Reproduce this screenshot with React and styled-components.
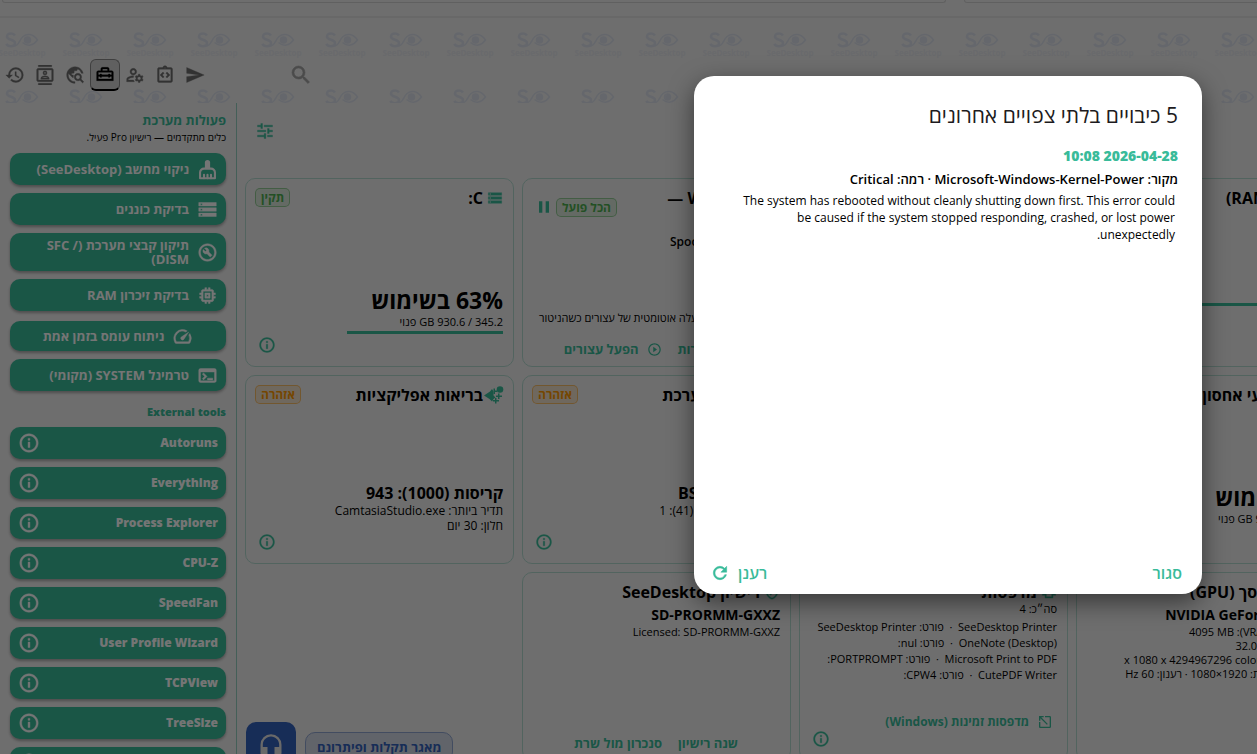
import React from 'react'

import styled, { createGlobalStyle, css } from 'styled-components'
import {
  MdHistory,
  MdOutlineContacts,
  MdTravelExplore,
  MdOutlineHomeRepairService,
  MdOutlineManageAccounts,
  MdOutlineIntegrationInstructions,
  MdSend,
  MdSearch,
  MdTune,
  MdStorage,
  MdOutlineBuildCircle,
  MdMemory,
  MdSpeed,
  MdOutlineTerminal,
  MdInfoOutline,
  MdPause,
  MdPlayCircleOutline,
  MdOutlineVerifiedUser,
  MdOutlinePrint,
  MdOpenInNew,
  MdRefresh,
  MdHeadset,
} from 'react-icons/md'

const accent = '#39bb9a'

const BrushIcon = ({ size }) => (
  <svg width={size} height={size} viewBox='0 0 24 24' fill='none' stroke='currentColor' strokeLinejoin='round' aria-hidden='true'>
    <path d='M9 11V4a3 3 0 0 1 6 0v7z' fill='currentColor' stroke='none' />
    <BrushBody d='M8 11h8a4.500 4.500 0 0 1 4.500 4.500V22h-17v-6.500A4.500 4.500 0 0 1 8 11Z' />
    <BrushBody d='M8 22v-4M12 22v-4M16 22v-4' strokeLinecap='round' />
  </svg>
)

const toolbarItems = [
  { label: 'היסטוריה', Icon: MdHistory },
  { label: 'אנשי קשר', Icon: MdOutlineContacts },
  { label: 'גילוי רשת', Icon: MdTravelExplore },
  { label: 'כלים', Icon: MdOutlineHomeRepairService, active: true },
  { label: 'ניהול משתמשים', Icon: MdOutlineManageAccounts },
  { label: 'סקריפטים', Icon: MdOutlineIntegrationInstructions },
  { label: 'שליחה', Icon: MdSend },
]

const systemActions = [
  { label: 'ניקוי מחשב (SeeDesktop)', Icon: BrushIcon },
  { label: 'בדיקת כוננים', Icon: MdStorage },
  { label: 'תיקון קבצי מערכת (SFC / DISM)', Icon: MdOutlineBuildCircle },
  { label: 'בדיקת זיכרון RAM', Icon: MdMemory },
  { label: 'ניתוח עומס בזמן אמת', Icon: MdSpeed, centered: true },
  { label: 'טרמינל SYSTEM (מקומי)', Icon: MdOutlineTerminal },
]

const externalTools = [
  'Autoruns',
  'Everything',
  'Process Explorer',
  'CPU-Z',
  'SpeedFan',
  'User Profile Wizard',
  'TCPView',
  'TreeSize',
  'WizTree',
]

const printers = [
  ['SeeDesktop Printer', 'SeeDesktop Printer'],
  ['OneNote (Desktop)', 'nul:'],
  ['Microsoft Print to PDF', 'PORTPROMPT:'],
  ['CutePDF Writer', 'CPW4:'],
]

const HealthIcon = () => (
  <HealthSvg width='16' height='18' viewBox='2 0 16 18' fill='currentColor' aria-hidden='true'>
    <path d='M-1 9.500 5 5.500 7 3 8.500 5.500v4l2 2-2 1.500L7 15.500 4.500 13Z' />
    <circle cx='15' cy='3.500' r='3.300' />
    <path d='M8.500 2.500h1.500v2h2V6h-2v2H8.500zM13 7.500h1.500v2h2.500V11h-2.500v2H13v-2h-2V9.500h2zM10 12h1.500v2H14v1.500h-2.500V17.500H10V15.500H8V14h2z' />
  </HealthSvg>
)

const Mark = ({ named }) => (
  <MarkCell>
    <svg width='34' height='18' viewBox='0 0 34 18' fill='none' stroke='#dce1ec' aria-hidden='true'>
      <path d='M10 4.500C9 3 7.500 2.500 6 2.500c-2.500 0-4 1.200-4 3C2 9.500 10 8 10 12c0 2-1.700 3.200-4.200 3.200-1.900 0-3.600-.8-4.500-2.400' strokeWidth='2.600' />
      <path d='M9 15c5 0 5-6 9-9.500 4-3.300 10-3 14.500 3.500-4 5.500-10 7-15 2.500' strokeWidth='1.500' />
      <circle cx='22.500' cy='9' r='3.800' fill='#dce1ec' stroke='none' />
    </svg>
    {named && <span>SeeDesktop</span>}
  </MarkCell>
)

const CardHead = ({ icon, title, badge, tone, children }) => (
  <Head>
    <Title>
      {icon}
      <h3>{title}</h3>
    </Title>
    {badge && <Badge $tone={tone}>{badge}</Badge>}
    {children}
  </Head>
)

const InfoFooter = () => (
  <Footer>
    <IconButton type='button' aria-label='מידע'>
      <MdInfoOutline size={18} />
    </IconButton>
  </Footer>
)

const App = () => {
  return (
    <Shell>
      <GlobalStyle />
      <TopStrip>
        <StripPanel $grow={944} />
        <StripPanel $grow={300} />
      </TopStrip>

      <Header>
        <Watermark aria-hidden='true'>
          {[0, 1].map((row) => (
            <MarkRow key={row}>
              {Array.from({ length: 20 }, (_, i) => <Mark key={i} named={row === 0} />)}
            </MarkRow>
          ))}
        </Watermark>
        <Toolbar>
          {toolbarItems.map(({ label, Icon, active }) => (
            <ToolButton key={label} type='button' aria-label={label} $active={active}>
              <Icon size={20} />
            </ToolButton>
          ))}
        </Toolbar>
        <SearchButton type='button' aria-label='חיפוש'>
          <MdSearch size={24} />
        </SearchButton>
      </Header>

      <Main>
        <Sidebar dir='rtl'>
          <SideTitle>פעולות מערכת</SideTitle>
          <SideNote>כלים מתקדמים — רישיון Pro פעיל.</SideNote>
          <ActionList>
            {systemActions.map(({ label, Icon, centered }) => (
              <ActionButton key={label} type='button' $centered={centered}>
                <Icon size={21} />
                <span>{label}</span>
              </ActionButton>
            ))}
          </ActionList>
          <SideSubtitle>External tools</SideSubtitle>
          <ActionList>
            {externalTools.map((name) => (
              <ActionButton key={name} type='button' $external>
                <span>{name}</span>
                <MdInfoOutline size={22} />
              </ActionButton>
            ))}
          </ActionList>
        </Sidebar>

        <Dashboard>
          <FilterBar>
            <IconButton type='button' aria-label='סינון'>
              <MirroredTune size={20} />
            </IconButton>
          </FilterBar>

          <Grid dir='rtl'>
            <Card>
              <CardHead icon={<MdMemory size={16} />} title='זיכרון (RAM)' />
              <Body $bottom>
                <Small>12.1 / 15.8 GB</Small>
                <Meter $value={100} />
              </Body>
              <Spacer $size={58} />
            </Card>
            <Card>
              <CardHead icon={<MdSpeed size={16} />} title='מעבד' />
            </Card>
            <Card>
              <CardHead icon={<MdSpeed size={16} />} title='Windows —'>
                <BadgeGroup>
                  <Badge $tone='ok'>הכל פועל</Badge>
                  <MdPause size={20} />
                </BadgeGroup>
              </CardHead>
              <Service>Spooler · wuauserv</Service>
              <Body $bottom>
                <Hint>ניטור פעיל — הפעלה אוטומטית של עצורים כשהניטור</Hint>
              </Body>
              <LinkRow>
                <TextButton type='button'>פתח הגדרות</TextButton>
                <TextButton type='button'>
                  <MdPlayCircleOutline size={15} />
                  הפעל עצורים
                </TextButton>
              </LinkRow>
            </Card>
            <Card>
              <CardHead icon={<MdStorage size={16} />} title='C:' badge='תקין' tone='ok' />
              <Body $bottom>
                <Big>63% בשימוש</Big>
                <Small>345.2 / 930.6 GB פנוי</Small>
                <Meter $value={63} />
              </Body>
              <InfoFooter />
            </Card>

            <Card>
              <CardHead icon={<MdStorage size={16} />} title='כל אמצעי אחסון' />
              <Body $bottom>
                <Big>9% בשימוש</Big>
                <Small>840.30 / 931.50 GB פנוי</Small>
              </Body>
              <Spacer $size={37} />
            </Card>
            <Card>
              <CardHead icon={<MdStorage size={16} />} title='רשת' />
            </Card>
            <Card>
              <CardHead icon={<MdStorage size={16} />} title='יציבות מערכת' badge='אזהרה' tone='warn' />
              <Body $bottom>
                <Value $large>אירועים BSOD</Value>
                <Detail>כיבויים לא תקינים (41): 1</Detail>
                <Detail>&nbsp;</Detail>
              </Body>
              <InfoFooter />
            </Card>
            <Card>
              <CardHead icon={<HealthIcon />} title='בריאות אפליקציות' badge='אזהרה' tone='warn' />
              <Body $bottom>
                <Value $large>קריסות (1000): 943</Value>
                <Detail>תדיר ביותר: CamtasiaStudio.exe</Detail>
                <Detail>חלון: 30 יום</Detail>
              </Body>
              <InfoFooter />
            </Card>

            <Card>
              <CardHead icon={<MdMemory size={16} />} title='כרטיס מסך (GPU)' />
              <Body>
                <Value>NVIDIA GeForce GTX 970</Value>
                <Small>זיכרון הווידאו (VRAM): 4095 MB</Small>
                <Small>דרייבר: 32.0.15.6094</Small>
                <Small>התצוגה: 1920 x 1080 x 4294967296 colors</Small>
                <Small>הרזולוציה הנוכחית: 1920×1080 · רענון: 60 Hz</Small>
              </Body>
            </Card>
            <Card>
              <CardHead icon={<MdOutlinePrint size={16} />} title='מדפסות' />
              <Body>
                <Small>סה״כ: 4</Small>
                <PrinterList>
                  {printers.map(([name, port]) => (
                    <li key={name}>{name}&nbsp; ·&nbsp; פורט: {port}</li>
                  ))}
                </PrinterList>
              </Body>
              <PrinterLink type='button'>
                <MirroredOpen size={16} />
                מדפסות זמינות (Windows)
              </PrinterLink>
              <InfoFooter />
            </Card>
            <Card>
              <CardHead icon={<MdOutlineVerifiedUser size={16} />} title='רישיון SeeDesktop' />
              <Body>
                <Value>SD-PRORMM-GXXZ</Value>
                <Small>Licensed: SD-PRORMM-GXXZ</Small>
              </Body>
              <LinkRow>
                <TextButton type='button'>שנה רישיון</TextButton>
                <TextButton type='button'>סנכרון מול שרת</TextButton>
              </LinkRow>
            </Card>
          </Grid>
        </Dashboard>
      </Main>

      <Support>
        <SupportButton type='button' aria-label='תמיכה'>
          <MdHeadset size={28} />
        </SupportButton>
        <SupportChip type='button'>מאגר תקלות ופיתרונם</SupportChip>
      </Support>

      <Overlay>
        <Dialog role='dialog' aria-modal='true' aria-labelledby='dialog-title' dir='rtl'>
          <DialogTitle id='dialog-title'>5 כיבויים בלתי צפויים אחרונים</DialogTitle>
          <Event>
            <EventTime>2026-04-28 10:08</EventTime>
            <EventSource>מקור: Microsoft-Windows-Kernel-Power · רמה: Critical</EventSource>
            <EventText>
              The system has rebooted without cleanly shutting down first. This error could be caused if the
              system stopped responding, crashed, or lost power unexpectedly.
            </EventText>
          </Event>
          <DialogActions>
            <DialogButton type='button'>סגור</DialogButton>
            <DialogButton type='button'>
              רענן
              <MdRefresh size={20} />
            </DialogButton>
          </DialogActions>
        </Dialog>
      </Overlay>
    </Shell>
  )
}

const GlobalStyle = createGlobalStyle`
*{
    box-sizing: border-box;
}
body{
    margin: 0;
    overflow: hidden;
    background-color: #f0f0f0;
    font-family: "Open Sans", "Noto Sans", sans-serif;
    color: #000;
}
h2, h3, p, ul{
    margin: 0;
    padding: 0;
}
button{
    border: none;
    background: none;
    padding: 0;
    font-family: inherit;
    color: inherit;
    cursor: pointer;
}
svg{
    flex-shrink: 0;
}
/* icon bounding boxes must stay invisible when icons get a stroke */
path[fill="none"]{
    stroke: none;
}`

const BrushBody = styled.path`
    stroke-width: 2.4;
`
const Shell = styled.div`
    position: relative;
    display: flex;
    flex-direction: column;
    height: 100vh;
    overflow: hidden;
`
const TopStrip = styled.div`
    display: flex;
    gap: 18px;
    height: 18px;
    flex-shrink: 0;
    padding: 0 0 14px 2px;
    margin-right: -8px;
    border-bottom: 2px solid #e2e2e2;
`
const StripPanel = styled.div`
    flex: ${({ $grow }) => $grow} 1 0;
    height: 3px;
    border: 1px solid #d2d2d2;
    border-top: none;
    border-radius: 0 0 12px 12px;
`
const Header = styled.header`
    position: relative;
    display: flex;
    align-items: center;
    height: 85px;
    flex-shrink: 0;
    padding-top: 28px;
    overflow: hidden;
`
/* decorative layer behind the toolbar */
const Watermark = styled.div`
    position: absolute;
    inset: 13px 0 0 -10px;
`
const MarkRow = styled.div`
    display: flex;
    height: 57px;
`
const MarkCell = styled.div`
    display: flex;
    flex-direction: column;
    align-items: center;
    width: 64px;
    flex-shrink: 0;
    font-size: 8px;
    font-weight: 700;
    line-height: 8px;
    color: #e4e6ec;
`
const Toolbar = styled.nav`
    position: relative;
    display: flex;
`
const ToolButton = styled.button`
    display: flex;
    align-items: center;
    justify-content: center;
    width: 30px;
    height: 32px;
    border-radius: 6px;
    color: #6e6e6e;
    svg{
        stroke-width: 0.4;
    }
    ${({ $active }) => $active && css`
        color: #000;
        background-color: #d2d2d2;
        border: 1px solid #8a8a8a;
        border-bottom: 2px solid #000;
    `}
`
const SearchButton = styled.button`
    position: relative;
    display: flex;
    margin-left: 79px;
    color: #a4a4a4;
    svg{
        stroke-width: 0.6;
    }
`
const Main = styled.main`
    display: flex;
    flex: 1;
    min-height: 0;
`
const Sidebar = styled.aside`
    width: 237px;
    flex-shrink: 0;
    padding: 8px 10px 0;
    border-right: 1px solid #95cfc0;
    overflow: hidden;
`
const SideTitle = styled.h2`
    font-size: 13px;
    line-height: 18px;
    color: ${accent};
`
const SideNote = styled.p`
    margin-bottom: 8px;
    font-size: 10px;
    line-height: 16px;
`
const SideSubtitle = styled.h3`
    margin: 12px 0 7px;
    font-size: 11px;
    font-weight: 800;
    line-height: 17px;
    color: ${accent};
`
const ActionList = styled.div`
    display: flex;
    flex-direction: column;
    gap: 8px;
`
const ActionButton = styled.button`
    display: flex;
    align-items: center;
    justify-content: ${({ $external }) => ($external ? 'space-between' : 'flex-start')};
    gap: 8px;
    min-height: 32px;
    padding: ${({ $external }) => ($external ? '0 8px' : '5px 8px')};
    border-radius: 10px;
    background-color: ${accent};
    box-shadow: 0 2px 3px rgba(0, 0, 0, 0.3);
    color: #fff;
    font-size: ${({ $external }) => ($external ? 12 : 13)}px;
    font-weight: ${({ $external }) => ($external ? 800 : 700)};
    line-height: 14px;
    text-align: right;
    svg{
        stroke-width: 0.5;
    }
    ${({ $centered }) => $centered && css`
        justify-content: center;
        min-height: 30px;
        margin-top: 2px;
        padding: 4px 8px;
    `}
`
const Dashboard = styled.section`
    flex: 1;
    min-width: 0;
    padding: 18px 8px 0;
`
const FilterBar = styled.div`
    display: flex;
    align-items: flex-start;
    height: 57px;
    padding-left: 10px;
`
const IconButton = styled.button`
    display: flex;
    color: ${accent};
    svg{
        stroke-width: 0.4;
    }
`
const MirroredTune = styled(MdTune)`
    transform: scaleX(-1);
`
const MirroredOpen = styled(MdOpenInNew)`
    transform: scaleX(-1);
`
const HealthSvg = styled.svg`
    overflow: visible;
`
const Grid = styled.div`
    display: grid;
    grid-template-columns: repeat(4, 269px);
    grid-auto-rows: 189px;
    gap: 8px;
    width: max-content;
`
const Card = styled.article`
    display: flex;
    flex-direction: column;
    min-width: 0;
    padding: 9px 10px 0 9px;
    border: 1px solid #b4dbd0;
    border-radius: 10px;
`
const Head = styled.div`
    display: flex;
    align-items: flex-start;
    justify-content: space-between;
    flex-shrink: 0;
    height: 20px;
`
const Title = styled.div`
    display: flex;
    align-items: center;
    gap: 4px;
    color: ${accent};
    white-space: nowrap;
    svg{
        stroke-width: 0.5;
    }
    h3{
        font-size: 16px;
        line-height: 20px;
        color: #000;
    }
`
const Badge = styled.span`
    --tone: ${({ $tone }) => ($tone === 'ok' ? '76, 175, 80' : '255, 152, 0')};
    padding: 0 5px;
    border: 1px solid rgba(var(--tone), 0.5);
    border-radius: 5px;
    background-color: rgba(var(--tone), 0.14);
    color: rgb(var(--tone));
    font-size: 12px;
    font-weight: 700;
    line-height: 17px;
`
const BadgeGroup = styled.div`
    display: flex;
    align-items: center;
    gap: 2px;
    padding: 9px 0 0 2px;
    color: ${accent};
`
const Service = styled.p`
    padding-top: 25px;
    font-size: 12px;
    font-weight: 600;
    line-height: 18px;
`
const Body = styled.div`
    display: flex;
    flex: 1;
    flex-direction: column;
    justify-content: ${({ $bottom }) => ($bottom ? 'flex-end' : 'flex-start')};
    white-space: nowrap;
`
const Big = styled.p`
    font-size: 23px;
    font-weight: 700;
    line-height: 30px;
`
const Value = styled.p`
    padding-top: 3px;
    font-size: ${({ $large }) => ($large ? 16 : 14)}px;
    font-weight: 700;
    line-height: 20px;
`
const Small = styled.p`
    font-size: 11px;
    line-height: 14px;
`
const Detail = styled.p`
    font-size: 12px;
    line-height: 15px;
`
const Hint = styled.p`
    padding: 0 6px 14px 0;
    font-size: 11px;
    line-height: 16px;
`
const Meter = styled.div`
    width: ${({ $value }) => $value}%;
    height: 3px;
    margin: 2px 0;
    background-color: ${accent};
`
const Footer = styled.div`
    display: flex;
    align-items: flex-start;
    justify-content: flex-end;
    flex-shrink: 0;
    height: 30px;
    padding-left: 3px;
`
const Spacer = styled.div`
    height: ${({ $size }) => $size}px;
    flex-shrink: 0;
`
const LinkRow = styled.div`
    display: flex;
    justify-content: center;
    gap: 16px;
    padding-bottom: 8px;
`
const TextButton = styled.button`
    display: flex;
    align-items: center;
    gap: 8px;
    color: ${accent};
    font-size: 13px;
    font-weight: 700;
    line-height: 18px;
    white-space: nowrap;
`
const PrinterLink = styled(TextButton)`
    padding-right: 4px;
    font-size: 12px;
    line-height: 16px;
`
const PrinterList = styled.ul`
    padding-top: 3px;
    list-style: none;
    font-size: 11px;
    line-height: 16px;
`
/* floats over the dashboard corner */
const Support = styled.div`
    position: absolute;
    left: 246px;
    bottom: -18px;
    display: flex;
    align-items: center;
    gap: 9px;
`
const SupportButton = styled.button`
    display: flex;
    align-items: center;
    justify-content: center;
    width: 50px;
    height: 50px;
    border-radius: 10px;
    background-color: #3462bd;
    color: #e4e4e4;
`
const SupportChip = styled.button`
    height: 30px;
    padding: 0 11px;
    border: 1px solid #91a7d2;
    border-radius: 10px;
    background-color: #d3d9e6;
    color: #3462bd;
    font-size: 13px;
    font-weight: 700;
`
const Overlay = styled.div`
    position: absolute;
    inset: 0;
    display: flex;
    align-items: flex-start;
    justify-content: flex-end;
    padding: 76px 55px 0 0;
    background-color: rgba(0, 0, 0, 0.54);
`
const Dialog = styled.section`
    display: flex;
    flex-direction: column;
    width: 508px;
    min-height: 518px;
    padding: 24px 20px 8px 16px;
    border-radius: 20px;
    background-color: #fff;
    box-shadow: 0 8px 24px rgba(0, 0, 0, 0.5);
`
const DialogTitle = styled.h2`
    padding: 0 4px;
    font-size: 21px;
    font-weight: 400;
    line-height: 30px;
    color: #1d1b20;
`
const Event = styled.div`
    flex: 1;
    padding: 16px 4px 0;
`
const EventTime = styled.p`
    font-size: 14px;
    font-weight: 800;
    line-height: 20px;
    color: ${accent};
`
const EventSource = styled.p`
    padding-top: 4px;
    font-size: 13px;
    font-weight: 600;
    line-height: 18px;
`
const EventText = styled.p`
    padding: 4px 3px 0 20px;
    font-size: 12px;
    line-height: 17px;
`
const DialogActions = styled.div`
    display: flex;
    justify-content: space-between;
`
const DialogButton = styled.button`
    display: flex;
    align-items: center;
    gap: 8px;
    color: ${accent};
    font-size: 16px;
    font-weight: 600;
    line-height: 26px;
    svg{
        stroke-width: 0.6;
    }
`

export default App
